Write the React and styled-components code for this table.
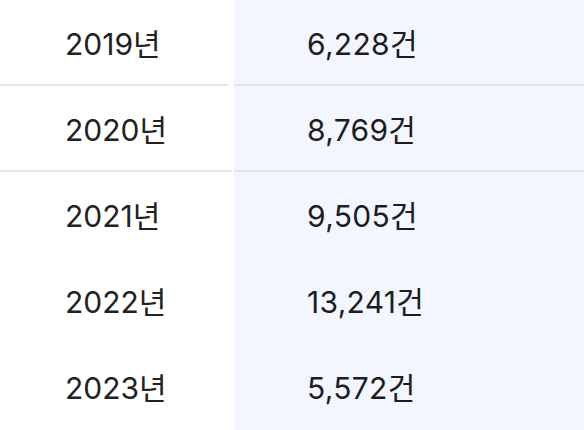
import React from 'react';
import styled, { createGlobalStyle } from 'styled-components';

const GlobalStyle = createGlobalStyle`
  html, body {
    margin: 0;
    padding: 0;
    background: #ffffff;
  }
  body {
    font-family: Inter, "Noto Sans CJK KR", sans-serif;
    color: #222222;
  }
`;

const Table = styled.div`
  display: grid;
  grid-template-columns: 234px 1fr;
  width: 584px;
  height: 430px;
  overflow: hidden;
`;

const YearCell = styled.div`
  position: relative;
  height: 84px;
  border-bottom: 2px solid transparent;
  display: flex;
  align-items: center;
  padding-left: 65px;
  font-size: 30px;
  font-weight: 400;

  &::after {
    content: '';
    position: absolute;
    left: 0;
    bottom: -2px;
    height: 2px;
    width: ${p => p.$line}px;
    background: ${p => (p.$line ? '#e4e4e4' : 'transparent')};
  }
`;

const CountCell = styled.div`
  height: 84px;
  border-bottom: 2px solid ${p => (p.$line ? '#e4e4e4' : 'transparent')};
  background: #f3f6fe;
  display: flex;
  align-items: center;
  padding-left: 73px;
  font-size: 30px;
  font-weight: 400;
  letter-spacing: 0.3px;
  color: #1d1d1f;
`;

const rows = [
  { year: '2019년', count: '6,228건', line: 228 },
  { year: '2020년', count: '8,769건', line: 232 },
  { year: '2021년', count: '9,505건', line: 0 },
  { year: '2022년', count: '13,241건', line: 0 },
  { year: '2023년', count: '5,572건', line: 0 },
];

export default function App() {
  return (
    <>
      <GlobalStyle />
      <Table>
        {rows.map(r => (
          <React.Fragment key={r.year}>
            <YearCell $line={r.line}>{r.year}</YearCell>
            <CountCell $line={r.line > 0}>{r.count}</CountCell>
          </React.Fragment>
        ))}
      </Table>
    </>
  );
}
